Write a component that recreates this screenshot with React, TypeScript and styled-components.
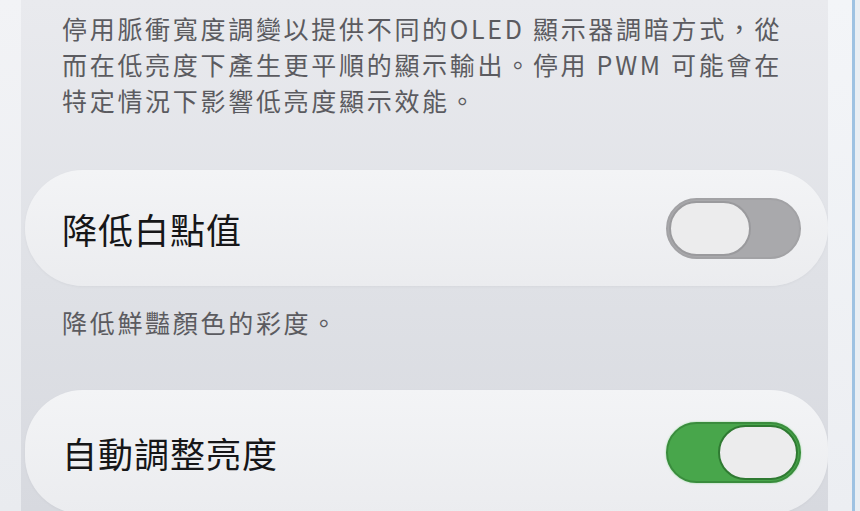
import React from 'react';
import styled, { createGlobalStyle } from 'styled-components';

const GlobalStyle = createGlobalStyle`
  html, body {
    margin: 0;
    padding: 0;
    width: 860px;
    height: 511px;
    overflow: hidden;
    background: #eceff3;
  }
`;

const Screen = styled.div`
  display: flex;
  width: 860px;
  height: 511px;
  font-family: 'Noto Sans CJK TC', 'Noto Sans', sans-serif;
`;

const EdgeStrip = styled.div<{ $w: number; $bg: string }>`
  flex: 0 0 ${(p) => p.$w}px;
  background: ${(p) => p.$bg};
`;

const Main = styled.div`
  flex: 1;
  display: flex;
  flex-direction: column;
  padding: 10px 0 0 4px;
  background: linear-gradient(180deg, #e9eaee 0%, #dfe1e6 55%, #d7d9df 100%);
  overflow: hidden;
`;

const Description = styled.p`
  margin: 0;
  padding: 0 20px 0 37px;
  font-size: 25px;
  line-height: 36px;
  letter-spacing: 2.7px;
  color: #5b5b60;
`;

const Card = styled.div<{ $h: number }>`
  display: flex;
  align-items: center;
  justify-content: space-between;
  height: ${(p) => p.$h}px;
  flex-shrink: 0;
  padding: 0 27px 0 37px;
  border-radius: 58px;
  background: linear-gradient(180deg, #f3f4f6 0%, #ebecef 100%);
  box-shadow: 0 1px 3px rgba(0, 0, 0, 0.04);
`;

const Label = styled.span`
  font-size: 35px;
  letter-spacing: 1px;
  color: #161618;
`;

const Track = styled.div<{ $on: boolean }>`
  display: flex;
  justify-content: ${(p) => (p.$on ? 'flex-end' : 'flex-start')};
  width: 135px;
  height: 61px;
  box-sizing: border-box;
  border-radius: 31px;
  padding: 1px;
  background: ${(p) => (p.$on ? '#48a64b' : '#a9a9ac')};
  border: 2px solid ${(p) => (p.$on ? '#3a8c3d' : '#a2a2a5')};
  box-shadow: ${(p) => (p.$on ? '0 0 2px rgba(72, 200, 80, 0.6)' : 'none')};
`;

const Knob = styled.div<{ $on: boolean }>`
  width: ${(p) => (p.$on ? 80 : 82)}px;
  height: 100%;
  box-sizing: border-box;
  border-radius: 30px;
  background: #ececed;
  border: 2px solid ${(p) => (p.$on ? '#2f7a32' : '#9a9a9d')};
`;

const Toggle: React.FC<{ on: boolean }> = ({ on }) => (
  <Track $on={on}>
    <Knob $on={on} />
  </Track>
);

const Gap = styled.div<{ $h: number }>`
  flex: 0 0 ${(p) => p.$h}px;
`;

const App: React.FC = () => {
  return (
    <>
      <GlobalStyle />
      <Screen>
        <EdgeStrip $w={21} $bg="linear-gradient(180deg, #f2f3f6, #e9ebef)" />
        <Main>
          <Description>
            停用脈衝寬度調變以提供不同的OLED 顯示器調暗方式，從而在低亮度下產生更平順的顯示輸出。停用 PWM 可能會在特定情況下影響低亮度顯示效能。
          </Description>
          <Gap $h={52} />
          <Card $h={116}>
            <Label>降低白點值</Label>
            <Toggle on={false} />
          </Card>
          <Gap $h={18} />
          <Description>降低鮮豔顏色的彩度。</Description>
          <Gap $h={50} />
          <Card $h={124}>
            <Label>自動調整亮度</Label>
            <Toggle on />
          </Card>
        </Main>
        <EdgeStrip $w={24} $bg="linear-gradient(180deg, #f3f5f8, #eceef2)" />
        <EdgeStrip $w={3} $bg="#9ec2e2" />
        <EdgeStrip $w={5} $bg="#e9eef3" />
      </Screen>
    </>
  );
};

export default App;
